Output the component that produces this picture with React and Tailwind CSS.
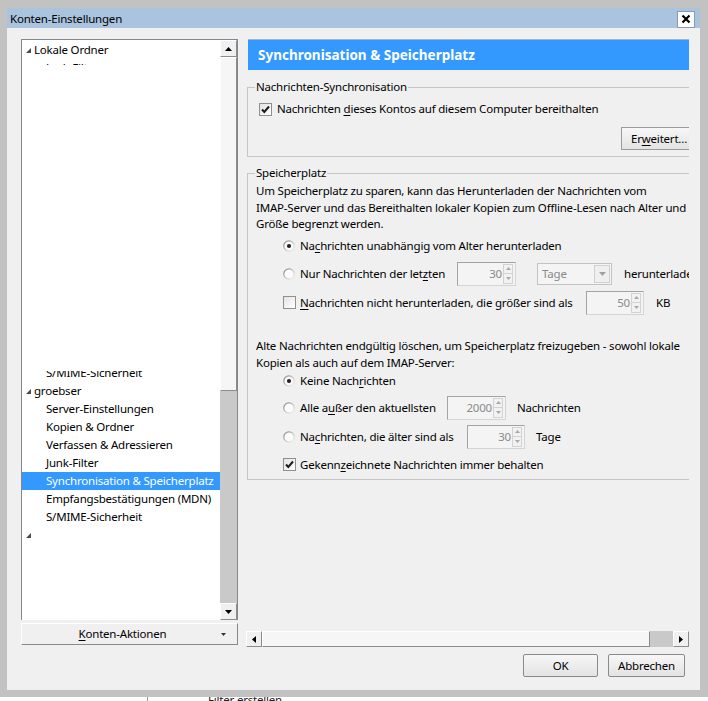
import React from "react";

const FONT = "font-['Noto_Sans','Open_Sans',sans-serif]";

function TreeArrow() {
  return (
    <svg width="7" height="7" viewBox="0 0 7 7" className="shrink-0">
      <polygon points="6,1 6,6 1,6" fill="#4a4a4a" />
    </svg>
  );
}

function Acc({ children }) {
  return <span className="underline decoration-1 underline-offset-[2px]">{children}</span>;
}

function Check({ checked }) {
  return (
    <div className="flex h-[13px] w-[13px] shrink-0 items-center justify-center border border-[#8e8f8f] bg-gradient-to-br from-[#e4e4e4] to-white">
      {checked && (
        <svg width="11" height="11" viewBox="0 0 11 11">
          <path d="M2 5.5 L4.3 8 L9 2.5" fill="none" stroke="#1c1c1c" strokeWidth="2" />
        </svg>
      )}
    </div>
  );
}

function Radio({ checked }) {
  return (
    <svg width="12" height="12" viewBox="0 0 12 12" className="shrink-0">
      <defs>
        <linearGradient id="radioRim" x1="0" y1="0" x2="1" y2="1">
          <stop offset="0" stopColor="#7d7d7d" />
          <stop offset="0.55" stopColor="#c8c8c8" />
          <stop offset="1" stopColor="#f4f4f4" />
        </linearGradient>
      </defs>
      <circle cx="6" cy="6" r="5.2" fill="#fbfbfb" stroke="url(#radioRim)" strokeWidth="1.2" />
      {checked && <circle cx="6" cy="6" r="2.1" fill="#222" />}
    </svg>
  );
}

function SpinArrow({ up }) {
  return (
    <svg width="5" height="3" viewBox="0 0 5 3">
      <polygon points={up ? "0,3 5,3 2.5,0" : "0,0 5,0 2.5,3"} fill="#a8a8a8" />
    </svg>
  );
}

function Spin({ value, className }) {
  return (
    <div className={`flex h-[24px] shrink-0 border border-[#d4d4d4] border-l-[#a3a3a3] border-t-[#a3a3a3] bg-[#f4f4f4] ${className}`}>
      <div className="flex flex-1 items-center justify-end pr-[1px] text-[#8a8a8a]">{value}</div>
      <div className="my-[1px] mr-[2px] flex w-[10px] flex-col">
        <div className="flex flex-1 items-center justify-center border border-[#d2d2d2] bg-[#f2f2f2]">
          <SpinArrow up />
        </div>
        <div className="flex flex-1 items-center justify-center border border-t-0 border-[#d2d2d2] bg-[#f2f2f2]">
          <SpinArrow />
        </div>
      </div>
    </div>
  );
}

function ScrollBtn({ dir, className = "" }) {
  const pts = {
    up: "0,4 7,4 3.5,0",
    down: "0,0 7,0 3.5,4",
    left: "4,0 4,7 0,3.5",
    right: "0,0 0,7 4,3.5",
  }[dir];
  const vertical = dir === "up" || dir === "down";
  return (
    <div
      className={`flex shrink-0 items-center justify-center border border-l-white border-t-white border-r-[#8c8c8c] border-b-[#8c8c8c] bg-[#f0f0f0] ${className}`}
    >
      <svg width={vertical ? 7 : 4} height={vertical ? 4 : 7} viewBox={vertical ? "0 0 7 4" : "0 0 4 7"}>
        <polygon points={pts} fill="#000" />
      </svg>
    </div>
  );
}

function WinButton({ children, className = "" }) {
  return (
    <div
      className={`flex h-[23px] items-center justify-center rounded-[2px] border border-[#8a8a8a] bg-gradient-to-b from-[#f7f7f7] to-[#e3e3e3] ${className}`}
    >
      {children}
    </div>
  );
}

function TreeRow({ children, top, selected }) {
  return (
    <div
      className={`flex h-[18px] shrink-0 items-center whitespace-nowrap ${top ? "gap-[2px] pl-[3px]" : "pl-[24px]"} ${
        selected ? "bg-[#3399ff] text-white" : ""
      }`}
    >
      {top && <TreeArrow />}
      {children}
    </div>
  );
}

function AccountTree() {
  const children = [
    "Server-Einstellungen",
    "Kopien & Ordner",
    "Verfassen & Adressieren",
    "Junk-Filter",
    "Synchronisation & Speicherplatz",
    "Empfangsbestätigungen (MDN)",
    "S/MIME-Sicherheit",
  ];
  return (
    <div className="flex h-[581px] border border-b-0 border-[#828790] bg-white">
      <div className="flex w-[198px] flex-col overflow-hidden pt-[1px]">
        <TreeRow top>Lokale Ordner</TreeRow>
        {/* rows scrolled out of view leave only slivers at the edges */}
        <div className="h-[6px] shrink-0 overflow-hidden">
          <TreeRow>Junk-Filter</TreeRow>
        </div>
        <div className="h-[306px] shrink-0" />
        <div className="h-[11px] shrink-0 overflow-hidden">
          <div className="-mt-[7px]">
            <TreeRow>S/MIME-Sicherheit</TreeRow>
          </div>
        </div>
        <TreeRow top>groebser</TreeRow>
        {children.map((c) => (
          <TreeRow key={c} selected={c.startsWith("Synchronisation")}>
            {c}
          </TreeRow>
        ))}
        <TreeRow top>
          <span />
        </TreeRow>
      </div>
      <div className="flex w-[17px] flex-col">
        <ScrollBtn dir="up" className="h-[17px]" />
        <div className="h-[334px] border border-l-white border-t-white border-r-[#8c8c8c] border-b-[#8c8c8c] bg-[#f6f6f6]" />
        <div className="flex-1 bg-[#c9c9c9]" />
        <ScrollBtn dir="down" className="h-[17px]" />
      </div>
    </div>
  );
}

function Group({ title, children, className = "" }) {
  return (
    <fieldset className={`ml-[1px] border border-r-0 border-[#c6c6c6] ${className}`}>
      <legend className="ml-[7px] px-[1px] leading-[16px]">{title}</legend>
      {children}
    </fieldset>
  );
}

function SettingsPane() {
  return (
    <div className="h-[592px] overflow-hidden">
      <div className="flex w-[472px] flex-col">
        <div className="ml-[2px] flex h-[31px] items-center border-t border-[#9fb4ca] bg-[#3399ff] pl-[10px] text-[13.5px] font-bold tracking-normal text-white">
          Synchronisation &amp; Speicherplatz
        </div>

        <Group title="Nachrichten-Synchronisation" className="mt-[9px] pb-[6px]">
          <div className="mt-[6px] flex h-[16px] items-center gap-[5px] pl-[11px]">
            <Check checked />
            <span>
              Nachrichten <Acc>d</Acc>ieses Kontos auf diesem Computer bereithalten
            </span>
          </div>
          <WinButton className="ml-[373px] mt-[10px] w-[84px] rounded-none border-[#9a9a9a]">
            <span className="-ml-[8px]">
              Er<Acc>w</Acc>eitert...
            </span>
          </WinButton>
        </Group>

        <Group title="Speicherplatz" className="mt-[8px] pb-[4px]">
          <p className="mt-[2px] whitespace-nowrap pl-[8px] leading-[16.5px]">
            Um Speicherplatz zu sparen, kann das Herunterladen der Nachrichten vom
            <br />
            IMAP-Server und das Bereithalten lokaler Kopien zum Offline-Lesen nach Alter und
            <br />
            Größe begrenzt werden.
          </p>

          <div className="pl-[35px]">
            <div className="mt-[3px] flex h-[20px] items-center gap-[5px]">
              <Radio checked />
              <span>
                Na<Acc>c</Acc>hrichten unabhängig vom Alter herunterladen
              </span>
            </div>
            <div className="mt-[6px] flex h-[24px] items-center whitespace-nowrap">
              <Radio />
              <span className="ml-[5px] w-[157px]">
                Nur Nachrichten der let<Acc>z</Acc>ten
              </span>
              <Spin value="30" className="w-[59px]" />
              <div className="ml-[21px] flex h-[22px] w-[75px] border border-[#c3c3c3] bg-[#f4f4f4]">
                <span className="flex-1 pl-[4px] leading-[20px] text-[#8a8a8a]">Tage</span>
                <div className="m-[1px] flex w-[16px] items-center justify-center border border-[#d0d0d0] bg-[#efefef]">
                  <svg width="7" height="4" viewBox="0 0 7 4">
                    <polygon points="0,0 7,0 3.5,4" fill="#a0a0a0" />
                  </svg>
                </div>
              </div>
              <span className="ml-[12px]">herunterladen</span>
            </div>
            <div className="mt-[5px] flex h-[24px] items-center whitespace-nowrap">
              <Check />
              <span className="ml-[4px] w-[286px]">
                <Acc>N</Acc>achrichten nicht herunterladen, die größer sind als
              </span>
              <Spin value="50" className="w-[58px]" />
              <span className="ml-[12px]">KB</span>
            </div>
          </div>

          <p className="mt-[22px] whitespace-nowrap pl-[8px] leading-[17px]">
            Alte Nachrichten endgültig löschen, um Speicherplatz freizugeben - sowohl lokale
            <br />
            Kopien als auch auf dem IMAP-Server:
          </p>

          <div className="pl-[35px]">
            <div className="flex h-[20px] items-center gap-[5px]">
              <Radio checked />
              <span>
                Keine Nach<Acc>r</Acc>ichten
              </span>
            </div>
            <div className="mt-[5px] flex h-[24px] items-center whitespace-nowrap">
              <Radio />
              <span className="ml-[5px] w-[147px]">
                Alle a<Acc>u</Acc>ßer den aktuellsten
              </span>
              <Spin value="2000" className="w-[59px]" />
              <span className="ml-[11px]">Nachrichten</span>
            </div>
            <div className="mt-[5px] flex h-[24px] items-center whitespace-nowrap">
              <Radio />
              <span className="ml-[5px] w-[167px]">
                Na<Acc>c</Acc>hrichten, die älter sind als
              </span>
              <Spin value="30" className="w-[58px]" />
              <span className="ml-[11px]">Tage</span>
            </div>
            <div className="mt-[6px] flex h-[20px] items-center gap-[4px]">
              <Check checked />
              <span>
                Gekenn<Acc>z</Acc>eichnete Nachrichten immer behalten
              </span>
            </div>
          </div>
        </Group>
      </div>
    </div>
  );
}

export default function App() {
  return (
    <div className={`h-[701px] w-[708px] overflow-hidden bg-white text-[11.5px] leading-[16px] tracking-[-0.2px] text-black ${FONT}`}>
      <div className="flex h-[697px] flex-col bg-[#c2c2c2] pb-[7px] pl-[7px] pr-[8px] pt-[8px]">
        {/* title bar */}
        <div className="flex h-[20px] shrink-0 items-center justify-between bg-[#aac3de] pl-[3px] pr-[5px]">
          <span className="mt-[1px]">Konten-Einstellungen</span>
          <div className="mt-[2px] flex h-[17px] w-[18px] items-center justify-center border border-[#8a9bb0] bg-white">
            <svg width="10" height="10" viewBox="0 0 10 10">
              <path d="M1.5 1.5 L8.5 8.5 M8.5 1.5 L1.5 8.5" stroke="#000" strokeWidth="2.2" />
            </svg>
          </div>
        </div>

        {/* client area */}
        <div className="flex flex-1 bg-[#f0f0f0] pl-[14px] pt-[11px]">
          <div className="flex w-[217px] flex-col">
            <AccountTree />
            <div className="relative mt-[3px] flex h-[22px] items-center justify-center border border-l-white border-t-white border-r-[#8a8a8a] border-b-[#8a8a8a] bg-[#f0f0f0] pr-[14px]">
              <span>
                <Acc>K</Acc>onten-Aktionen
              </span>
              <svg width="5" height="3" viewBox="0 0 5 3" className="absolute right-[11px] top-[9px]">
                <polygon points="0,0 5,0 2.5,3" fill="#333" />
              </svg>
            </div>
          </div>

          <div className="ml-[8px] flex w-[443px] flex-col">
            <SettingsPane />
            <div className="flex h-[16px]">
              <ScrollBtn dir="left" className="w-[16px]" />
              <div className="w-[388px] border border-l-white border-t-white border-r-[#8c8c8c] border-b-[#8c8c8c] bg-[#f6f6f6]" />
              <div className="flex-1 bg-[#c9c9c9]" />
              <ScrollBtn dir="right" className="w-[16px]" />
            </div>
            <div className="mt-[7px] flex justify-end gap-[10px] pr-[4px]">
              <WinButton className="w-[75px]">OK</WinButton>
              <WinButton className="w-[77px]">Abbrechen</WinButton>
            </div>
          </div>
        </div>
      </div>

      {/* window lying behind the dialog */}
      <div className="flex h-[4px] overflow-hidden">
        <div className="ml-[147px] w-px bg-[#9a9a9a]" />
        <span className="-mt-[4px] ml-[60px] whitespace-nowrap leading-[14px] text-[#222]">Filter erstellen</span>
      </div>
    </div>
  );
}
